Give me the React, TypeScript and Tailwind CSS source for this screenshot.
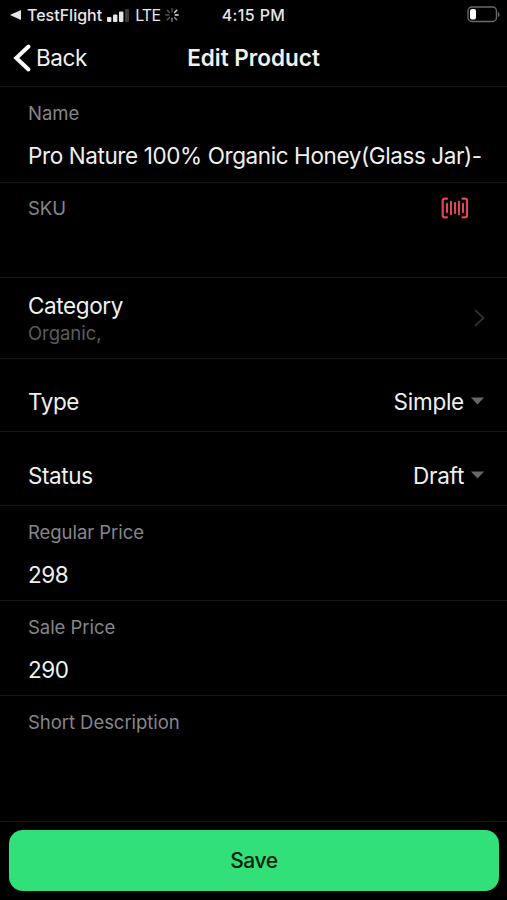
import { ReactNode } from "react";

type FieldProps = {
  label: string;
  value?: string;
  className?: string;
  children?: ReactNode;
};

const Field = ({ label, value, className = "h-[95px] pt-[13px]", children }: FieldProps) => (
  <div className={`flex justify-between border-b border-[#161616] pl-7 pr-[38px] ${className}`}>
    <div>
      <p className="text-[18.5px] leading-[26px] tracking-[-0.05px] text-[#86868a]">{label}</p>
      {value && (
        <p className="mt-4 whitespace-nowrap text-[22.5px] leading-7 tracking-[-0.4px]">{value}</p>
      )}
    </div>
    {children}
  </div>
);

type SelectRowProps = {
  label: string;
  value: string;
  className: string;
};

const SelectRow = ({ label, value, className }: SelectRowProps) => (
  <div
    className={`flex items-end justify-between border-b border-[#161616] pb-[15px] pl-7 pr-[23px] text-[22.5px] leading-7 tracking-[-0.4px] ${className}`}
  >
    <span>{label}</span>
    <div className="flex items-center gap-[7px]">
      <span className="tracking-[-0.25px]">{value}</span>
      <svg width="13" height="8" viewBox="0 0 13 8" className="-mt-[3px] fill-[#68686a]">
        <path d="M0 .5h13L6.5 7.5z" />
      </svg>
    </div>
  </div>
);

const BarcodeIcon = () => (
  <svg width="28" height="22" viewBox="0 0 28 22" fill="none" stroke="#e04656" strokeLinecap="round">
    <path d="M6 1.7H3.8q-2.1 0-2.1 2.1v14.4q0 2.1 2.1 2.1H6" strokeWidth="2.2" />
    <path d="M21.5 1.7h2.4q2.1 0 2.1 2.1v14.4q0 2.1-2.1 2.1h-2.4" strokeWidth="2.2" />
    <path d="M6 6.8v8.4M10 4.8v12.4M14 6v10M18 4.8v12.4M22 6.8v8.4" strokeWidth="2" />
  </svg>
);

const StatusBar = () => (
  <div className="grid h-[30px] grid-cols-[1fr_auto_1fr] items-center pl-[10px] pr-[7px] text-[16px] font-medium leading-5 text-[#e6e6e6]">
    <div className="flex items-center">
      <svg width="11" height="10" viewBox="0 0 11 10" fill="currentColor">
        <path d="M0 5 11 0v10z" />
      </svg>
      <span className="ml-[6px]">TestFlight</span>
      <svg width="22" height="13" viewBox="0 0 22 13" fill="currentColor" className="ml-[5px]">
        <rect y="8" width="4.4" height="5" rx="1" />
        <rect x="6" y="5.5" width="4.4" height="7.5" rx="1" />
        <rect x="12" y="2.5" width="4.4" height="10.5" rx="1" />
        <rect x="18" width="4" height="13" rx="1" fill="#3a3a3a" />
      </svg>
      <span className="ml-[6px] font-normal tracking-[-0.8px]">LTE</span>
      <svg width="14" height="14" viewBox="0 0 14 14" strokeWidth="1.4" strokeLinecap="round" className="ml-[5px]">
        <path d="M9.5 4.5 11.8 2.2M10.2 7h3" stroke="#e0e0e0" />
        <path d="M9.5 9.5l2.2 2.2M7 10.2v3" stroke="#8a8a8a" />
        <path d="M4.500 9.500l-2.200 2.200M3.800 7h-3M4.500 4.500 2.300 2.300M7 3.800v-3" stroke="#565656" />
      </svg>
    </div>
    <span className="mr-[3px] tracking-[0.35px]">4:15 PM</span>
    <svg width="33" height="17" viewBox="0 0 33 17" fill="none" className="-mt-[2px] justify-self-end">
      <rect x="1" y="1" width="28.5" height="14.5" rx="4" stroke="#6a6a6a" strokeWidth="1.4" />
      <rect x="3" y="3" width="6" height="10.5" rx="2" fill="#fff" />
      <path d="M31 6v5q1.6-.7 1.6-2.5T31 6" fill="#6a6a6a" />
    </svg>
  </div>
);

const EditProduct = () => {
  return (
    <div className="h-[900px] w-[507px] overflow-hidden bg-black font-['Inter',sans-serif] text-[#f0f0f0]">
      <StatusBar />

      <header className="grid h-[57px] grid-cols-[1fr_auto_1fr] items-center border-b border-[#161616] pb-px pl-[13px] pr-[13px]">
        <button className="flex items-center text-[22.5px] leading-7 tracking-[-0.4px]">
          <svg width="19" height="30" viewBox="0 0 19 30" fill="none" stroke="#fff" strokeWidth="4" strokeLinecap="round">
            <path d="M15.5 3.5 3.3 15l12.2 11.5" />
          </svg>
          <span className="ml-1">Back</span>
        </button>
        <h1 className="text-[22.5px] font-semibold leading-7">Edit Product</h1>
      </header>

      <Field label="Name" value="Pro Nature 100% Organic Honey(Glass Jar)-" className="h-24 pt-[13px]" />
      <Field label="SKU" className="h-[95px] pt-3">
        <div className="pt-[2px]">
          <BarcodeIcon />
        </div>
      </Field>

      <div className="flex h-[81px] items-center justify-between border-b border-[#161616] pl-7 pr-[21px]">
        <div className="pt-[2px]">
          <p className="text-[22.5px] leading-7 tracking-[-0.4px]">Category</p>
          <p className="text-[18.5px] leading-[26px] tracking-[-0.05px] text-[#5c5c5e]">Organic,</p>
        </div>
        <svg width="12" height="18" viewBox="0 0 12 18" fill="none" stroke="#303032" strokeWidth="1.8">
          <path d="M1 1l8.500 8L1 17" />
        </svg>
      </div>

      <SelectRow label="Type" value="Simple" className="h-[73px]" />
      <SelectRow label="Status" value="Draft" className="h-[74px]" />

      <Field label="Regular Price" value="298" />
      <Field label="Sale Price" value="290" />
      <Field label="Short Description" className="h-[126px] pt-[13px]" />

      <div className="pl-[9px] pr-2 pt-2">
        <button className="h-[61px] w-full rounded-[14px] bg-[#31e078] pt-px text-[21px] font-medium tracking-[-0.4px] text-[#06210f]">
          Save
        </button>
      </div>
    </div>
  );
};

const App = () => <EditProduct />;

export default App;
